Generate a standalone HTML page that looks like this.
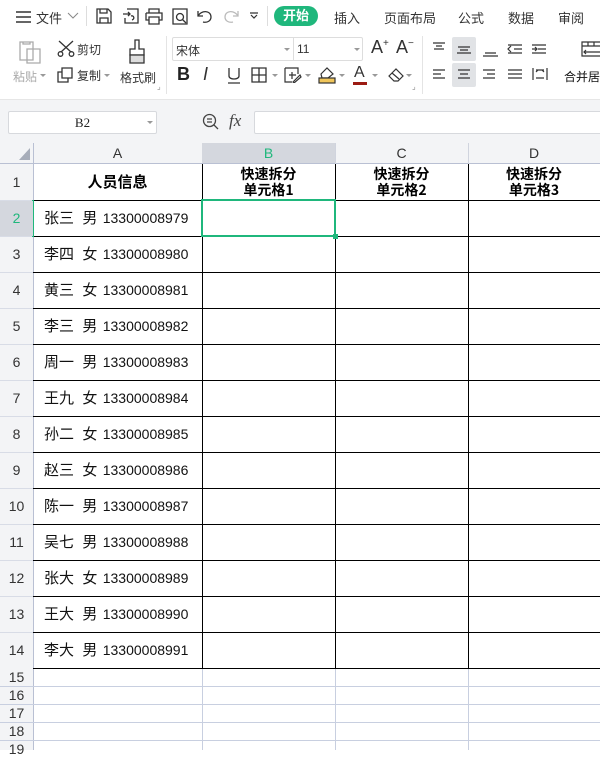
<!DOCTYPE html>
<html><head><meta charset="utf-8"><style>
*{margin:0;padding:0;box-sizing:border-box}
body{width:600px;height:750px;overflow:hidden;background:#fff;font-family:"Liberation Sans","Noto Sans CJK SC",sans-serif;position:relative;color:#222}
.a{position:absolute}
.t{font-size:12px;color:#333;position:absolute;white-space:nowrap}
svg{position:absolute}
.hd{position:absolute;top:143px;height:21px;font-size:14px;text-align:center;line-height:21px;color:#333;background:#f3f4f6}
.rh{position:absolute;left:0;width:33px;text-align:center;font-size:14px;color:#333;background:#f3f4f6}
.cell{position:absolute;left:33px;width:169px;height:36px;line-height:36px;padding-left:11px;font-size:15px;font-family:"Noto Sans CJK SC",sans-serif;color:#111;word-spacing:5px;white-space:nowrap}
.cell span{font-family:"Liberation Sans",sans-serif;font-size:14px;letter-spacing:0;margin-left:-3px}
.hc{position:absolute;top:164px;height:36px;text-align:center;font-weight:bold;font-size:14px;line-height:16px;padding-top:2px;font-family:"Noto Sans CJK SC",sans-serif;color:#000}
</style></head><body>
<svg style="left:15px;top:10px" width="17" height="14"><path d="M1 2H16M1 7H16M1 12H16" stroke="#333" stroke-width="1.4"/></svg>
<div class="t" style="left:36px;top:8px;font-size:13px">文件</div>
<svg style="left:67px;top:12px" width="12" height="8"><path d="M1 1L6 6L11 1" stroke="#888" fill="none"/></svg>
<div class="a" style="left:86px;top:6px;width:1px;height:20px;background:#ddd"></div>
<svg style="left:95px;top:7px" width="18" height="18" fill="none" stroke="#333" stroke-width="1.3"><path d="M2 2H13L16 5V16H2Z M5 2V6H12V2 M5 16V11H13V16"/></svg>
<svg style="left:122px;top:7px" width="18" height="18" fill="none" stroke="#333" stroke-width="1.3"><path d="M5 2H16V16H3V11 M1 7H8M6 5L8 7L6 9 M9 9C12 8 13 12 10 13"/></svg>
<svg style="left:145px;top:7px" width="18" height="18" fill="none" stroke="#333" stroke-width="1.3"><path d="M4 6V2H14V6 M1 6H17V13H14 M4 13H1V6 M4 10H14V17H4Z"/></svg>
<svg style="left:171px;top:7px" width="18" height="18" fill="none" stroke="#333" stroke-width="1.3"><path d="M2 2H16V17H2Z"/><circle cx="9" cy="10" r="3.5"/><path d="M11.5 12.5L15 16"/></svg>
<svg style="left:196px;top:7px" width="18" height="18" fill="none" stroke="#333" stroke-width="1.3"><path d="M2 4V9H7 M2 9C5 3 15 3 15 10C15 14 11 16 7 15"/></svg>
<svg style="left:222px;top:7px" width="18" height="18" fill="none" stroke="#bbb" stroke-width="1.3"><path d="M16 4V9H11 M16 9C13 3 3 3 3 10C3 14 7 16 11 15"/></svg>
<svg style="left:249px;top:12px" width="10" height="8" fill="none" stroke="#333" stroke-width="1.2"><path d="M1 1H9M2 3L5 6L8 3"/></svg>
<div class="a" style="left:267px;top:6px;width:1px;height:20px;background:#ddd"></div>
<div class="a" style="left:274px;top:6px;width:44px;height:20px;border-radius:10px;background:#1fb77c;color:#fff;font-size:13px;font-weight:bold;text-align:center;line-height:20px">开始</div>
<div class="t" style="left:334px;top:8px;font-size:13px">插入</div>
<div class="t" style="left:384px;top:8px;font-size:13px">页面布局</div>
<div class="t" style="left:458px;top:8px;font-size:13px">公式</div>
<div class="t" style="left:508px;top:8px;font-size:13px">数据</div>
<div class="t" style="left:558px;top:8px;font-size:13px">审阅</div>
<svg style="left:18px;top:40px" width="24" height="24" fill="none" stroke="#aaa" stroke-width="1.3"><path d="M2 2H15V20H2Z M5 2V4H12V2 M9 9H22V23H9Z" fill="#fff"/></svg>
<div class="t" style="left:13px;top:68px;color:#aaa">粘贴</div>
<svg style="left:40px;top:74px" width="6" height="4"><path d="M0 0H6L3 3Z" fill="#999"/></svg>
<svg style="left:57px;top:40px" width="18" height="17" fill="none" stroke="#333" stroke-width="1.3"><path d="M2 1L14 12M16 1L4 12"/><circle cx="3.5" cy="14" r="2.3"/><circle cx="14.5" cy="14" r="2.3"/></svg>
<div class="t" style="left:77px;top:41px">剪切</div>
<svg style="left:57px;top:67px" width="16" height="16" fill="none" stroke="#333" stroke-width="1.3"><path d="M5 1H15V11H5Z M5 5H1V15H11V11"/></svg>
<div class="t" style="left:77px;top:67px">复制</div>
<svg style="left:104px;top:74px" width="6" height="4"><path d="M0 0H6L3 3Z" fill="#999"/></svg>
<svg style="left:127px;top:39px" width="20" height="26" fill="none" stroke="#333" stroke-width="1.3"><path d="M8 1H12V10H17V16H3V10H8Z"/><path d="M3 16H17V24H3Z" fill="#ddd"/></svg>
<div class="t" style="left:120px;top:69px">格式刷</div>
<div class="a" style="left:166px;top:36px;width:1px;height:58px;background:#e4e4e4"></div>
<div class="a" style="left:172px;top:37px;width:191px;height:24px;border:1px solid #ddd;border-radius:2px"></div>
<div class="a" style="left:293px;top:38px;width:1px;height:22px;background:#ddd"></div>
<div class="t" style="left:176px;top:42px">宋体</div>
<div class="t" style="left:297px;top:42px;color:#333">11</div>
<svg style="left:284px;top:48px" width="6" height="4"><path d="M0 0H6L3 3Z" fill="#999"/></svg>
<svg style="left:354px;top:48px" width="6" height="4"><path d="M0 0H6L3 3Z" fill="#999"/></svg>
<div class="t" style="left:371px;top:37px;font-size:18px;color:#333">A<sup style="font-size:10px">+</sup></div>
<div class="t" style="left:396px;top:37px;font-size:18px;color:#333">A<sup style="font-size:10px">−</sup></div>
<div class="t" style="left:177px;top:64px;font-size:18px;font-weight:bold;color:#222">B</div>
<div class="t" style="left:203px;top:64px;font-size:18px;font-style:italic;color:#333">I</div>
<svg style="left:226px;top:67px" width="16" height="18" fill="none" stroke="#333" stroke-width="1.3"><path d="M3 1V9C3 13 13 13 13 9V1M2 16H14"/></svg>
<svg style="left:251px;top:67px" width="16" height="16" fill="none" stroke="#333" stroke-width="1.3"><path d="M1 1H15V15H1Z M8 1V15 M1 8H15"/></svg>
<svg style="left:272px;top:74px" width="6" height="4"><path d="M0 0H6L3 3Z" fill="#999"/></svg>
<svg style="left:284px;top:67px" width="18" height="16" fill="none" stroke="#333" stroke-width="1.2"><path d="M1 1H14V7 M1 1V15H8 M8 5V12M5 8H12 M9 15L16 8L17 10L10 16Z"/></svg>
<svg style="left:305px;top:74px" width="6" height="4"><path d="M0 0H6L3 3Z" fill="#999"/></svg>
<svg style="left:318px;top:66px" width="18" height="18" fill="none" stroke="#333" stroke-width="1.2"><path d="M3 8L9 2L15 8L10 12H4Z"/><rect x="1" y="12" width="16" height="5" fill="#f0c55a" stroke="#333"/></svg>
<svg style="left:339px;top:74px" width="6" height="4"><path d="M0 0H6L3 3Z" fill="#999"/></svg>
<div class="t" style="left:354px;top:64px;font-size:16px;color:#333">A</div>
<div class="a" style="left:353px;top:82px;width:14px;height:3px;background:#9c1b13"></div>
<svg style="left:372px;top:74px" width="6" height="4"><path d="M0 0H6L3 3Z" fill="#999"/></svg>
<svg style="left:387px;top:66px" width="20" height="18" fill="none" stroke="#333" stroke-width="1.2"><path d="M2 10L9 3L16 10L11 15H7Z M5 7L12 13"/></svg>
<svg style="left:406px;top:74px" width="6" height="4"><path d="M0 0H6L3 3Z" fill="#999"/></svg>
<div class="a" style="left:422px;top:36px;width:1px;height:58px;background:#e4e4e4"></div>
<div class="a" style="left:452px;top:37px;width:24px;height:24px;background:#e1e3e6;border-radius:2px"></div>
<div class="a" style="left:452px;top:63px;width:24px;height:24px;background:#e1e3e6;border-radius:2px"></div>
<svg style="left:430px;top:40px" width="170" height="44" fill="none" stroke="#333" stroke-width="1.2">
<path d="M3 3H15M6 6H12M4 9H14"/>
<path d="M28 7H40M30 10H38M27 13H41"/>
<path d="M55 13H66M53 16H68"/>
<path d="M78 5H92M84 9H92M78 13H92M81 6L78 9L81 12"/>
<path d="M102 5H116M108 9H116M102 13H116M102 9H107M105 7L107 9L105 11"/>
<path d="M3 30H15M3 34H11M3 38H15"/>
<path d="M28 30H40M30 34H38M28 38H40"/>
<path d="M53 30H65M57 34H65M53 38H65"/>
<path d="M78 30H92M78 34H92M78 38H92"/>
<path d="M103 28V40M117 28V40M106 30H114M106 38H114M106 32L108 30M114 32L112 30"/>
<path d="M152 2H172V16H152Z M152 6H172 M158 2V6 M164 2V6 M154 12H170 M156 10L154 12L156 14"/>
</svg>
<div class="t" style="left:564px;top:68px;color:#111">合并居</div>
<div class="t" style="left:157px;top:82px;font-size:8px;color:#888">⌟</div>
<div class="t" style="left:412px;top:82px;font-size:8px;color:#888">⌟</div>
<div class="a" style="left:0;top:99px;width:600px;height:44px;background:#f3f4f6;border-top:1px solid #e6e6e6"></div>
<div class="a" style="left:8px;top:111px;width:149px;height:23px;background:#fff;border:1px solid #d7d9dd;border-radius:2px;text-align:center;font-size:13px;line-height:21px;font-family:'Liberation Serif',serif">B2</div>
<svg style="left:147px;top:121px" width="6" height="4"><path d="M0 0H6L3 3Z" fill="#999"/></svg>
<svg style="left:202px;top:113px" width="18" height="18" fill="none" stroke="#444" stroke-width="1.3"><circle cx="7.5" cy="7.5" r="6"/><path d="M5 6H10M5 9H10M12 12L16 16"/></svg>
<div class="t" style="left:229px;top:111px;font-size:17px;font-style:italic;font-family:'Liberation Serif',serif;color:#444">fx</div>
<div class="a" style="left:254px;top:111px;width:350px;height:23px;background:#fff;border:1px solid #d7d9dd;border-radius:2px"></div>
<div class="a" style="left:0;top:143px;width:600px;height:21px;background:#f3f4f6"></div>
<div class="a" style="left:0;top:164px;width:33px;height:586px;background:#f3f4f6"></div>
<svg style="left:18px;top:147px" width="12" height="14"><path d="M12 1V13H1Z" fill="#a7adb9"/></svg>
<div class="hd" style="left:33px;width:169px">A</div>
<div class="hd" style="left:202px;width:133px;background:#d4d7de;color:#1fb77c">B</div>
<div class="hd" style="left:335px;width:133px">C</div>
<div class="hd" style="left:468px;width:132px">D</div>
<div class="a" style="left:0;top:163px;width:600px;height:1px;background:#b9c0d3"></div>
<div class="a" style="left:33px;top:143px;width:1px;height:607px;background:#b9c0d3"></div>
<div class="a" style="left:335px;top:143px;width:1px;height:21px;background:#d0d4de"></div>
<div class="a" style="left:468px;top:143px;width:1px;height:21px;background:#d0d4de"></div>
<svg style="left:0;top:0" width="600" height="750">
<g stroke="#c8cfe0" stroke-width="1">
<path d="M0 686.5H600M0 704.5H600M0 722.5H600M0 740.5H600"/>
<path d="M202.5 668V750M335.5 668V750M468.5 668V750"/>
</g>
<g stroke="#d8dce6"><path d="M0 200.5H33M0 236.5H33M0 272.5H33M0 308.5H33M0 344.5H33M0 380.5H33M0 416.5H33M0 452.5H33M0 488.5H33M0 524.5H33M0 560.5H33M0 596.5H33M0 632.5H33"/></g>
<g stroke="#000" stroke-width="1">
<path d="M33 200.5H600M33 236.5H600M33 272.5H600M33 308.5H600M33 344.5H600M33 380.5H600M33 416.5H600M33 452.5H600M33 488.5H600M33 524.5H600M33 560.5H600M33 596.5H600M33 632.5H600M33 668.5H600"/>
<path d="M202.5 164V668M335.5 164V668M468.5 164V668"/>
</g>
<rect x="202" y="200" width="133" height="36" fill="none" stroke="#1fb77c" stroke-width="2"/>
<rect x="333" y="234" width="5" height="5" fill="#1fb77c"/>
<rect x="32" y="200" width="2" height="37" fill="#1fb77c"/>
</svg>
<div class="a" style="left:0;top:201px;width:33px;height:35px;background:#d4d7de"></div>
<div class="rh" style="top:164px;height:36px;line-height:36px;background:none">1</div>
<div class="rh" style="top:200px;height:36px;line-height:36px;background:none;color:#1fb77c">2</div>
<div class="rh" style="top:236px;height:36px;line-height:36px;background:none">3</div>
<div class="rh" style="top:272px;height:36px;line-height:36px;background:none">4</div>
<div class="rh" style="top:308px;height:36px;line-height:36px;background:none">5</div>
<div class="rh" style="top:344px;height:36px;line-height:36px;background:none">6</div>
<div class="rh" style="top:380px;height:36px;line-height:36px;background:none">7</div>
<div class="rh" style="top:416px;height:36px;line-height:36px;background:none">8</div>
<div class="rh" style="top:452px;height:36px;line-height:36px;background:none">9</div>
<div class="rh" style="top:488px;height:36px;line-height:36px;background:none">10</div>
<div class="rh" style="top:524px;height:36px;line-height:36px;background:none">11</div>
<div class="rh" style="top:560px;height:36px;line-height:36px;background:none">12</div>
<div class="rh" style="top:596px;height:36px;line-height:36px;background:none">13</div>
<div class="rh" style="top:632px;height:36px;line-height:36px;background:none">14</div>
<div class="rh" style="top:668px;height:18px;line-height:18px;background:none">15</div>
<div class="rh" style="top:686px;height:18px;line-height:18px;background:none">16</div>
<div class="rh" style="top:704px;height:18px;line-height:18px;background:none">17</div>
<div class="rh" style="top:722px;height:18px;line-height:18px;background:none">18</div>
<div class="rh" style="top:740px;height:18px;line-height:18px;background:none">19</div>
<div class="hc" style="left:33px;width:169px;line-height:36px;padding:0;font-size:15px">人员信息</div>
<div class="hc" style="left:202px;width:133px">快速拆分<br>单元格1</div>
<div class="hc" style="left:335px;width:133px">快速拆分<br>单元格2</div>
<div class="hc" style="left:468px;width:132px">快速拆分<br>单元格3</div>
<div class="cell" style="top:200px">张三 男 <span>13300008979</span></div>
<div class="cell" style="top:236px">李四 女 <span>13300008980</span></div>
<div class="cell" style="top:272px">黄三 女 <span>13300008981</span></div>
<div class="cell" style="top:308px">李三 男 <span>13300008982</span></div>
<div class="cell" style="top:344px">周一 男 <span>13300008983</span></div>
<div class="cell" style="top:380px">王九 女 <span>13300008984</span></div>
<div class="cell" style="top:416px">孙二 女 <span>13300008985</span></div>
<div class="cell" style="top:452px">赵三 女 <span>13300008986</span></div>
<div class="cell" style="top:488px">陈一 男 <span>13300008987</span></div>
<div class="cell" style="top:524px">吴七 男 <span>13300008988</span></div>
<div class="cell" style="top:560px">张大 女 <span>13300008989</span></div>
<div class="cell" style="top:596px">王大 男 <span>13300008990</span></div>
<div class="cell" style="top:632px">李大 男 <span>13300008991</span></div>
</body></html>
